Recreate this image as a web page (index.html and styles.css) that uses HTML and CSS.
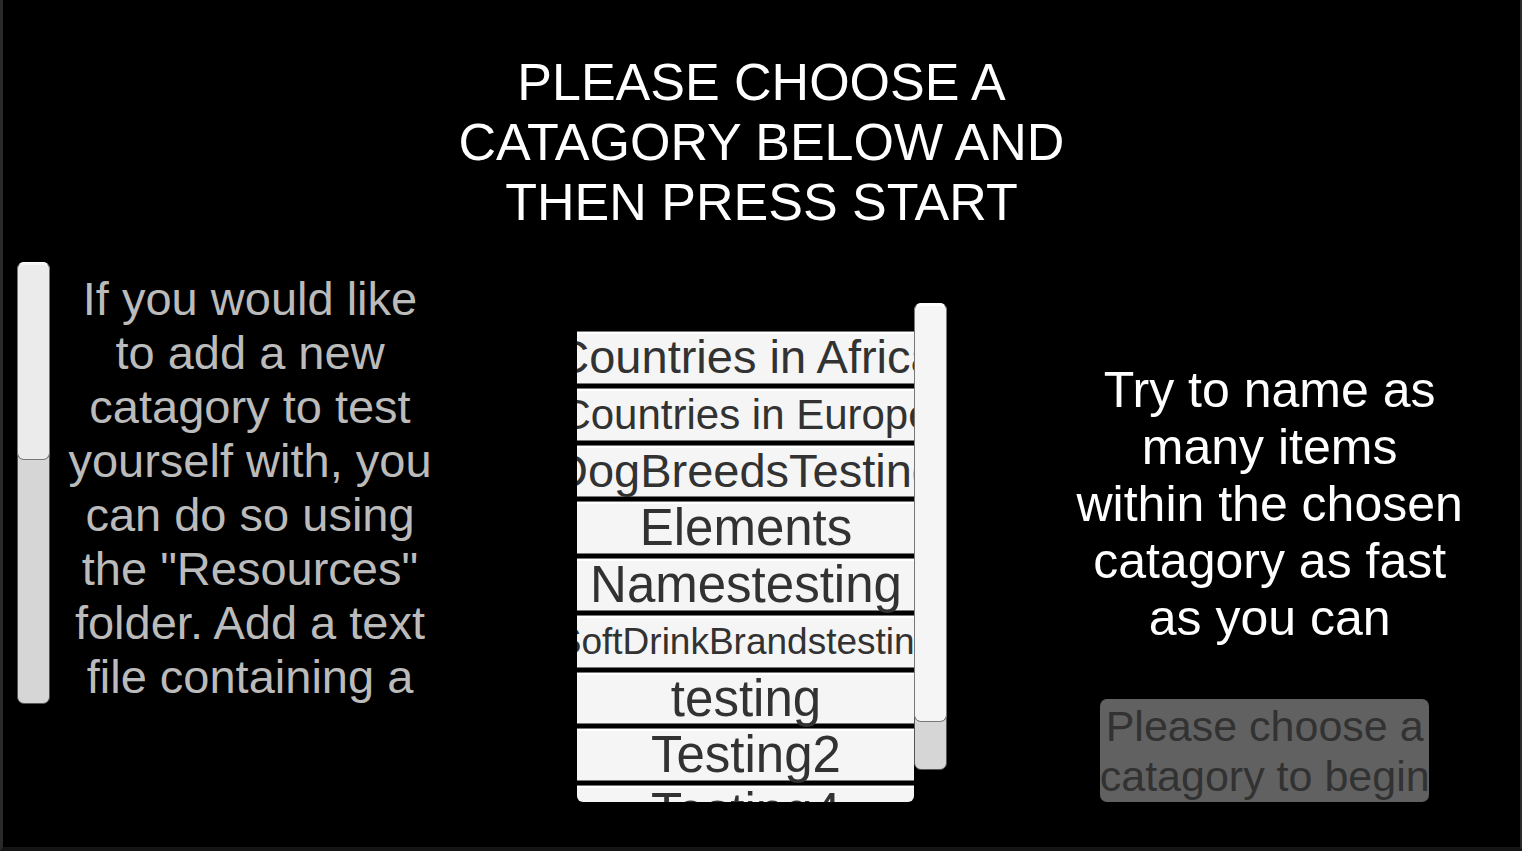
FILE: index.html
```html
<!DOCTYPE html>
<html lang="en">
<head>
<meta charset="utf-8">
<title>Choose a category</title>
<link rel="stylesheet" href="styles.css">
</head>
<body>
<h1 class="title">PLEASE CHOOSE A<br>CATAGORY BELOW AND<br>THEN PRESS START</h1>
<main class="columns">
  <section class="help">
    <div class="scrollbar" role="scrollbar" aria-label="Scroll help" aria-controls="help" aria-valuenow="0"><div class="thumb help-thumb"></div></div>
    <p class="help-text" id="help">If you would like to add a new catagory to test yourself with, you can do so using the "Resources" folder. Add a text file containing a</p>
  </section>
  <section class="picker">
    <div class="viewport" id="categories">
      <div class="list">
        <button class="item large" type="button">Countries in Africa</button>
        <button class="item medium" type="button">Countries in Europe</button>
        <button class="item large" type="button">DogBreedsTesting</button>
        <button class="item" type="button">Elements</button>
        <button class="item" type="button">Namestesting</button>
        <button class="item small" type="button">SoftDrinkBrandstesting</button>
        <button class="item" type="button">testing</button>
        <button class="item" type="button">Testing2</button>
        <button class="item" type="button">Testing4</button>
      </div>
    </div>
    <div class="scrollbar list-bar" role="scrollbar" aria-label="Scroll categories" aria-controls="categories" aria-valuenow="0"><div class="thumb list-thumb"></div></div>
  </section>
  <section class="start">
    <p class="goal">Try to name as many items within the chosen catagory as fast as you can</p>
    <button class="start-button" type="button" disabled>Please choose a<br>catagory to begin</button>
  </section>
</main>
</body>
</html>
```
FILE: styles.css
```css
* {
  box-sizing: border-box;
}

body {
  margin: 0;
  min-height: 100vh;
  background: #000;
  border: 0 solid #2a2a2a;
  border-width: 0 2px 4px 3px;
  border-bottom-color: #151515;
  font-family: "Liberation Sans", Arial, sans-serif;
}

button {
  font-family: inherit;
  padding: 0;
}

.title {
  margin: 0;
  padding-top: 52px;
  color: #fff;
  font-size: 52px;
  font-weight: 400;
  line-height: 60px;
  text-align: center;
}

.columns {
  display: grid;
  grid-template-columns: repeat(3, 1fr);
  align-items: start;
  padding-top: 30px;
}

.scrollbar {
  flex: none;
  width: 33px;
  background: #d6d6d6;
  border: 1px solid #555;
  border-radius: 7px;
}

.thumb {
  margin: -1px;
  background: #f5f5f5;
  border: 1px solid #777;
  border-top-color: #fff;
  border-radius: 7px;
  box-shadow: inset 0 2px #fff;
}

.help {
  display: flex;
  gap: 14px;
  height: 442px;
  padding-left: 14px;
}

.help-thumb {
  height: 198px;
  background: #ebebeb;
  box-shadow: inset 0 2px #f5f5f5;
}

.help-text {
  width: 372px;
  margin: 0;
  padding-top: 10px;
  overflow: hidden;
  color: #bbb;
  font-size: 47px;
  line-height: 54px;
  text-align: center;
}

.picker {
  display: flex;
  justify-content: center;
  padding-top: 41px;
  padding-left: 2px;
}

.viewport {
  width: 337px;
  height: 471px;
  margin-top: 28px;
  overflow: hidden;
  border-radius: 0 0 6px 6px;
}

.list {
  display: grid;
  grid-auto-rows: 1fr;
  gap: 4px;
  height: 507px;
}

.item {
  display: flex;
  align-items: center;
  justify-content: center;
  min-width: 0;
  min-height: 0;
  background: #f5f5f5;
  border: solid #777;
  border-width: 1px 0;
  box-shadow: inset 0 2px #fff;
  color: #323232;
  font-size: 51px;
  line-height: 51px;
  white-space: nowrap;
}

.large {
  font-size: 47px;
  line-height: 50px;
}

.medium {
  font-size: 42px;
}

.small {
  font-size: 37px;
}

.list-bar {
  height: 467px;
}

.list-thumb {
  height: 419px;
}

.start {
  display: flex;
  flex-direction: column;
  align-items: center;
  gap: 52px;
  padding-top: 100px;
}

.goal {
  width: 396px;
  margin: 0 0 0 5px;
  color: #fff;
  font-size: 50px;
  line-height: 57px;
  text-align: center;
}

.start-button {
  display: flex;
  align-items: center;
  justify-content: center;
  width: 329px;
  height: 103px;
  margin-right: 5px;
  overflow: hidden;
  background: #616161;
  border: 0;
  border-radius: 7px;
  color: #323232;
  font-size: 43px;
  line-height: 50px;
  white-space: nowrap;
}
```
